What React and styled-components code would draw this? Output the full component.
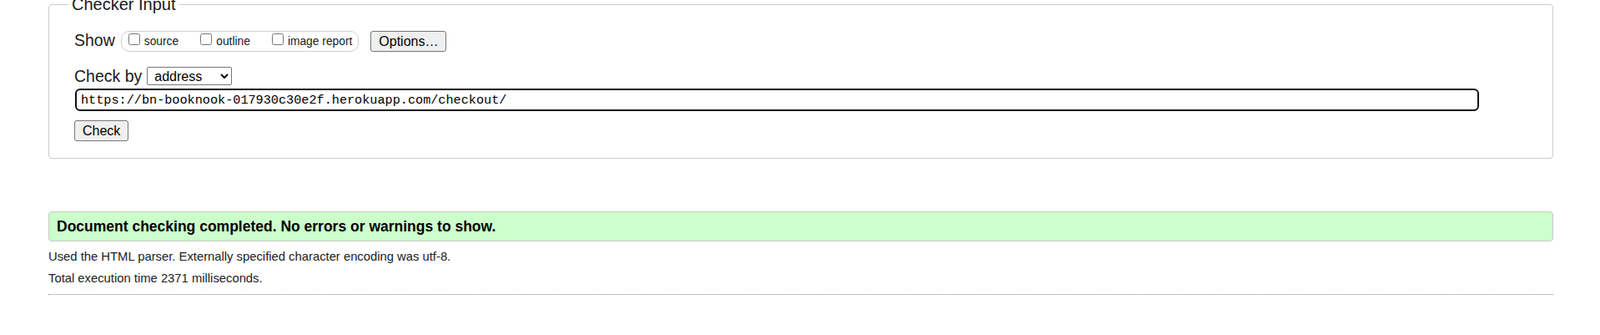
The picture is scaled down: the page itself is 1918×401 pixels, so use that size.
import React from "react";
import styled, { createGlobalStyle } from "styled-components";

const GlobalStyle = createGlobalStyle`
  *, *::before, *::after {
    box-sizing: border-box;
  }
  body {
    margin: 0;
    background: #ffffff;
    color: #1a1a1a;
    font-family: "Liberation Sans", Arial, sans-serif;
  }
`;

const Page = styled.div`
  margin-top: -6px;
  padding: 0 56px 0 58px;
`;

const Fieldset = styled.fieldset`
  margin: 0;
  min-width: 0;
  padding: 21px 30px 20px 30px;
  border: 1px solid #cccccc;
  border-radius: 4px;
`;

const Legend = styled.legend`
  margin-left: -7px;
  padding: 0 4px;
  font-size: 20px;
  line-height: 22px;
`;

const Row = styled.div`
  display: flex;
  align-items: flex-start;
  margin-top: ${(p) => p.$top || 0}px;
`;

const Label = styled.span`
  font-size: 19.5px;
  line-height: 22px;
  margin-right: ${(p) => p.$space}px;
`;

const Toggles = styled.div`
  display: flex;
  align-items: center;
  gap: 26px;
  height: 25px;
  padding: 0 7px 0 8px;
  border: 1px solid #cfcfcf;
  border-radius: 10px;
`;

const Toggle = styled.label`
  display: flex;
  align-items: center;
  gap: 5px;
  font-size: 13.8px;
  color: #1a1a1a;

  input {
    width: 14px;
    height: 14px;
    margin: 0 0 5px 0;
  }
`;

const Button = styled.button`
  display: block;
  height: 25px;
  margin-left: ${(p) => p.$left || 0}px;
  margin-top: ${(p) => p.$top || 0}px;
  padding: 0 9px;
  font-family: "Liberation Sans", Arial, sans-serif;
  font-size: 16px;
  color: #000000;
  background: #efefef;
  border: 1px solid #767676;
  border-radius: 3px;
`;

const Select = styled.select`
  width: 102px;
  height: 22px;
  padding: 0 0 0 4px;
  font-family: "Liberation Sans", Arial, sans-serif;
  font-size: 16px;
  color: #000000;
  background: #ffffff;
  border: 1px solid #767676;
  border-radius: 2px;
`;

const UrlInput = styled.input`
  display: block;
  width: 1683px;
  height: 27px;
  margin: 4px 0 0 1px;
  padding: 0 5px;
  font-family: "Liberation Mono", "DejaVu Sans Mono", monospace;
  font-size: 15.2px;
  color: #000000;
  border: 2px solid #101010;
  border-radius: 6px;
  outline: none;
`;

const Success = styled.div`
  display: flex;
  align-items: center;
  height: 36px;
  margin-top: 63px;
  padding: 0 9px;
  font-size: 17.5px;
  font-weight: bold;
  color: #000000;
  background: #ccffcc;
  border: 1px solid #c8c8c8;
  border-radius: 4px;
`;

const Detail = styled.p`
  margin: ${(p) => p.$top || 0}px 0 0 0;
  font-size: 14.8px;
  line-height: 26px;
  color: #222222;
`;

const Rule = styled.div`
  margin-top: 6px;
  border-top: 1px dotted #888888;
`;

const toggles = ["source", "outline", "image report"];

const App = () => {
  return (
    <>
      <GlobalStyle />
      <Page>
        <Fieldset>
          <Legend>Checker Input</Legend>
          <Row>
            <Label $space={7}>Show</Label>
            <Toggles>
              {toggles.map((name) => (
                <Toggle key={name}>
                  <input type="checkbox" />
                  {name}
                </Toggle>
              ))}
            </Toggles>
            <Button $left={14}>Options…</Button>
          </Row>
          <Row $top={18}>
            <Label $space={6}>Check by</Label>
            <Select defaultValue="address">
              <option value="address">address</option>
              <option value="file">file upload</option>
              <option value="text">text input</option>
            </Select>
          </Row>
          <UrlInput
            type="url"
            readOnly
            value="https://bn-booknook-017930c30e2f.herokuapp.com/checkout/"
          />
          <Button $top={11}>Check</Button>
        </Fieldset>
        <Success>
          Document checking completed. No errors or warnings to show.
        </Success>
        <Detail $top={5}>
          Used the HTML parser. Externally specified character encoding was
          utf-8.
        </Detail>
        <Detail>Total execution time 2371 milliseconds.</Detail>
        <Rule />
      </Page>
    </>
  );
};

export default App;
